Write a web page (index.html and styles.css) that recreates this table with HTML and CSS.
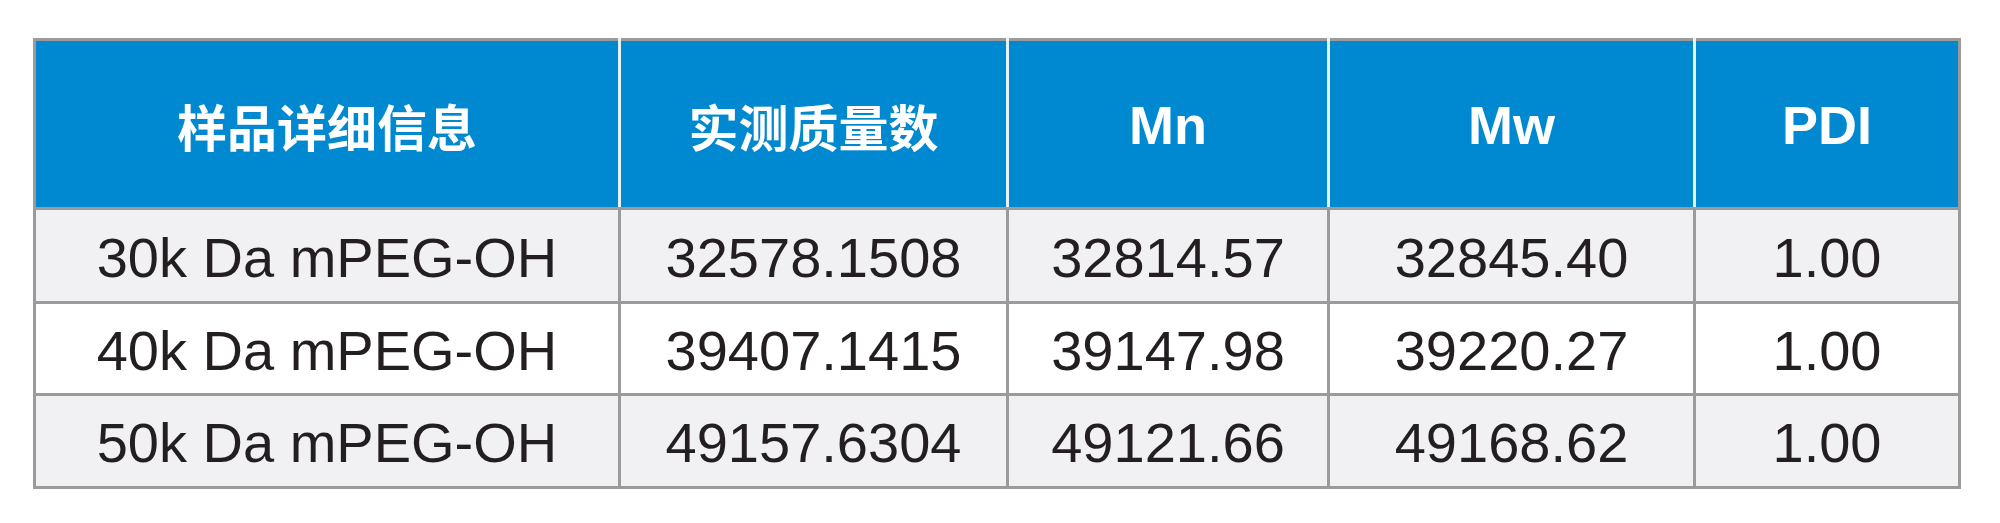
FILE: index.html
```html
<!DOCTYPE html>
<html lang="zh-CN">
<head>
<meta charset="utf-8">
<title>mPEG-OH</title>
<link rel="stylesheet" href="styles.css">
</head>
<body>
<div class="wrap">
<table class="data">
<colgroup>
<col class="c1"><col class="c2"><col class="c3"><col class="c4"><col class="c5">
</colgroup>
<thead>
<tr class="head">
<th><span class="cjk">样品详细信息</span></th>
<th><span class="cjk">实测质量数</span></th>
<th>Mn</th>
<th>Mw</th>
<th>PDI</th>
</tr>
</thead>
<tbody>
<tr class="r1 alt"><td>30k Da mPEG-OH</td><td>32578.1508</td><td>32814.57</td><td>32845.40</td><td>1.00</td></tr>
<tr class="r2"><td>40k Da mPEG-OH</td><td>39407.1415</td><td>39147.98</td><td>39220.27</td><td>1.00</td></tr>
<tr class="r3 alt"><td>50k Da mPEG-OH</td><td>49157.6304</td><td>49121.66</td><td>49168.62</td><td>1.00</td></tr>
</tbody>
</table>
</div>
</body>
</html>
```
FILE: styles.css
```css
html, body {
  margin: 0;
  padding: 0;
  background: #ffffff;
}
.wrap {
  padding: 38px 0 0 33px;
}
.data {
  border-collapse: collapse;
  width: 1925px;
  table-layout: fixed;
  font-family: "Liberation Sans", "Noto Sans CJK SC", sans-serif;
  color: #231f20;
}
.c1 { width: 585px; }
.c2 { width: 388px; }
.c3 { width: 321px; }
.c4 { width: 366px; }
.c5 { width: 265px; }
.data th, .data td {
  border: 3px solid #9b9b9b;
  text-align: center;
  vertical-align: middle;
  padding: 0;
}
.head {
  height: 169px;
  background: #0089d0;
}
.data th {
  color: #ffffff;
  font-weight: 700;
  font-size: 54px;
  padding-top: 2px;
  border-left-color: #e6f3fb;
  border-right-color: #e6f3fb;
}
.data th:first-child { border-left-color: #9b9b9b; }
.data th:last-child { border-right-color: #9b9b9b; }
.cjk {
  font-family: "Noto Sans CJK SC", sans-serif;
  font-size: 50px;
  font-weight: 700;
}
.data td {
  font-size: 56px;
  font-weight: 400;
  padding-top: 3px;
}
.r1 { height: 94px; }
.r2 { height: 92px; }
.r3 { height: 93px; }
.alt { background: #f1f1f3; }
```
